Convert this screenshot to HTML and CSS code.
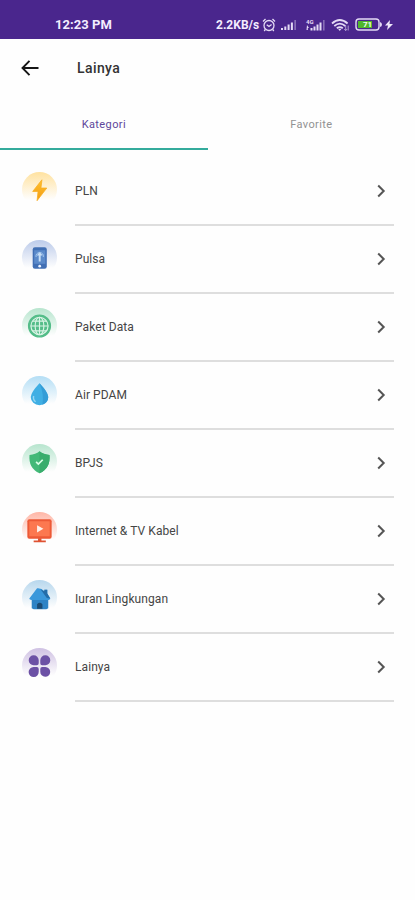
FILE: index.html
```html
<!DOCTYPE html>
<html lang="id">
<head>
<meta charset="utf-8">
<title>Lainya</title>
<link rel="stylesheet" href="styles.css">
</head>
<body>
<div class="status">
  <span class="time">12:23 PM</span>
  <div class="indicators">
    <span class="speed">2.2KB/s</span>
    <svg class="alarm" width="14" height="14" viewBox="0 0 14 14" fill="none" stroke="#e4daf5" stroke-width="1.3"><circle cx="7" cy="7.5" r="5"/><path d="M4.7 6.8 7 8.5l2.6-2M1 3.5 3.5 1M13 3.5 10.500 1M3.300 11.500 2.200 13M10.700 11.500 11.800 13"/></svg>
    <svg class="signal" width="16" height="12" viewBox="0 0 16 12" fill="#e4daf5"><path d="M0 9h2v2H0zM3.300 7.500h2V11h-2zM6.600 5.500h2V11h-2zM9.900 3.500h2V11h-2z"/><path d="M13.300 1h1.700v10h-1.700z" opacity=".4"/></svg>
    <svg class="signal4g" width="22" height="14" viewBox="0 0 22 14" fill="#e4daf5"><text class="net" x="1" y="5.500">4G</text><path d="M2 7l2 3H2.800v2H1.500zM5.500 10h2v2.500h-2zM8.500 8.500h2v4h-2zM11.500 6.500h2v6h-2zM14.500 4.500h2v8h-2z"/><path d="M18 2h1.600v10.500H18z" opacity=".4"/></svg>
    <svg class="wifi" width="19" height="14" viewBox="0 0 19 14" fill="none" stroke="#e4daf5" stroke-width="1.800"><path d="M1 5.500q7.800-7 15.600 0M3.300 8q5.500-4.800 11 0M5.800 10.300q3-2.400 6 0"/><path d="M7 10.800h3.600L8.800 13z" fill="#e4daf5" stroke="none"/><path d="M14.700 7.500v5M13.200 11l1.500 1.500 1.500-1.500M17.200 12.500v-5" stroke-width=".9" opacity=".7"/></svg>
    <svg class="battery" width="28" height="13" viewBox="0 0 28 13"><rect x="1" y="1" width="23" height="11" rx="3" fill="#4a268d" stroke="#e4daf5" stroke-width="1.400"/><path d="M3 3h14v7H3z" fill="#4fb52c"/><path d="M25 4q2 .5 2 2.500T25 9z" fill="#e4daf5"/><text class="charge" x="12.500" y="9.400" text-anchor="middle">71</text></svg>
    <svg class="bolt" width="8" height="12" viewBox="0 0 8 12"><path d="M5 1 0 6.500h3L2 11l6-6H4.500z" fill="#eee8fa"/></svg>
  </div>
</div>
<header class="bar">
  <svg width="18" height="16" viewBox="0 0 18 16" fill="none" stroke="#161616" stroke-width="1.900"><path d="M17.500 8H1.500M8.500.8 1.500 8l7 7.200"/></svg>
  <h1>Lainya</h1>
</header>
<nav class="tabs"><a class="tab active">Kategori</a><a class="tab">Favorite</a></nav>
<ul class="list">
  <li><span class="icon yellow"><svg viewBox="0 0 36 36"><defs><linearGradient id="gold" x2="0" y2="1"><stop stop-color="#ffc22e"/><stop offset="1" stop-color="#f39b14"/></linearGradient></defs><path d="M20.500 8 11 20h5.500L15.500 29.500 25.500 16.500H19.500z" fill="url(#gold)" stroke="#f9ae20" stroke-width=".8" stroke-linejoin="round"/></svg></span><div class="row"><span>PLN</span><svg class="chev" viewBox="0 0 9 14"><path d="m1.200 1.500 5.500 5.500-5.500 5.500"/></svg></div></li>
  <li><span class="icon blue"><svg viewBox="0 0 36 36"><rect x="11" y="7.500" width="14.500" height="22" rx="2.300" fill="#416fb4"/><path d="M12.500 10.500h11.500v14H12.500z" fill="#5b8aca"/><path d="m18.200 12-3 4h2v6h2v-6h2z" fill="#c7def6"/><path d="M14.500 17.500q-.7-4 3.700-4.700 4.400.700 3.700 4.700" fill="none" stroke="#a6c8ef"/><circle cx="18.200" cy="26.900" r="1.400" fill="#edf4ff"/></svg></span><div class="row"><span>Pulsa</span><svg class="chev" viewBox="0 0 9 14"><path d="m1.200 1.500 5.500 5.500-5.500 5.500"/></svg></div></li>
  <li><span class="icon green"><svg viewBox="0 0 36 36" fill="none" stroke="#d9f4e5" stroke-width="1.200"><circle cx="18" cy="18.500" r="11.300" fill="#54bd89" stroke="#54bd89"/><ellipse cx="18" cy="18.500" rx="4.500" ry="9"/><circle cx="18" cy="18.500" r="8.800"/><path d="M9 18.500h18M18 9.500v18M11 13.500h14M11 23.500h14"/></svg></span><div class="row"><span>Paket Data</span><svg class="chev" viewBox="0 0 9 14"><path d="m1.200 1.500 5.500 5.500-5.500 5.500"/></svg></div></li>
  <li><span class="icon sky"><svg viewBox="0 0 36 36"><path d="M18 7.500q9 9.500 9 14.200a9 8.300 0 0 1-18 0Q9 17 18 7.500z" fill="#40afe4"/><path d="M18 7.500q9 9.500 9 14.200a9 8.300 0 0 1-6 7.800Q23 19 18 7.500z" fill="#349dd7"/><path d="M12 20.500q-1 3.500 2 6" fill="none" stroke="#94d7f4" stroke-width="1.500"/></svg></span><div class="row"><span>Air PDAM</span><svg class="chev" viewBox="0 0 9 14"><path d="m1.200 1.500 5.500 5.500-5.500 5.500"/></svg></div></li>
  <li><span class="icon green"><svg viewBox="0 0 36 36"><path d="M18 7.500q4 3.500 10.300 3.700Q29.500 25 18 30 6.500 25 7.700 11.200 14 11 18 7.500z" fill="#43b978"/><path d="M18 7.500q4 3.500 10.300 3.700Q29.500 25 18 30z" fill="#39ad6d"/><path d="m14.500 18.500 2.300 2.200 4.500-4.500" fill="none" stroke="#d9ffe6" stroke-width="1.800"/></svg></span><div class="row"><span>BPJS</span><svg class="chev" viewBox="0 0 9 14"><path d="m1.200 1.500 5.500 5.500-5.500 5.500"/></svg></div></li>
  <li><span class="icon red"><svg viewBox="0 0 36 36"><rect x="5.500" y="7.500" width="25" height="20" rx="2" fill="#ed5936"/><rect x="7.500" y="9.500" width="21" height="15.500" fill="#fc7850"/><path d="m15.500 13.500 6.500 3.800-6.500 3.800z" fill="#fff0e9"/><path d="M16.500 27H20v2.300h4.500V31H12v-1.700h4.500z" fill="#df5232"/></svg></span><div class="row"><span>Internet &amp; TV Kabel</span><svg class="chev" viewBox="0 0 9 14"><path d="m1.200 1.500 5.500 5.500-5.500 5.500"/></svg></div></li>
  <li><span class="icon azure"><svg viewBox="0 0 36 36"><path d="M10 18h17v11l-2 1H12l-2-1z" fill="#2e83c5"/><path d="M15.500 8.500 7.500 19q0 1.500 2.500 1.500h17.500q2-.5 1.500-2l-3-4.500v-4h-3v1.500q-3-3.500-7.500-3z" fill="#3a98db"/><path d="m19 9.500 4 2V10h3v4l3 5-3.500-.5z" fill="#236da9"/><path d="M15.500 29.500V25q2.700-3 5.500 0v4.500z" fill="#1c4b73"/></svg></span><div class="row"><span>Iuran Lingkungan</span><svg class="chev" viewBox="0 0 9 14"><path d="m1.200 1.500 5.500 5.500-5.500 5.500"/></svg></div></li>
  <li><span class="icon purple"><svg viewBox="0 0 36 36" fill="#6c51a5"><path d="M12 7.500a5.200 5.200 0 0 1 5.200 5.200v3q0 2-2 2H12a5.100 5.100 0 0 1 0-10.200zM24 7.500a5.100 5.100 0 0 1 0 10.200h-3.200q-2 0-2-2v-3A5.200 5.200 0 0 1 24 7.500zM12 19.500h3.200q2 0 2 2v3a5.200 5.200 0 1 1-5.200-5zM20.800 19.500H24a5.100 5.100 0 1 1-5.200 5v-3q0-2 2-2z"/></svg></span><div class="row"><span>Lainya</span><svg class="chev" viewBox="0 0 9 14"><path d="m1.200 1.500 5.500 5.500-5.500 5.500"/></svg></div></li>
</ul>
</body>
</html>
```
FILE: styles.css
```css
* { box-sizing: border-box; }
body { margin: 0; width: 415px; height: 900px; overflow: hidden; background: #fefefe; color: #454545; font-family: Roboto, sans-serif; }
svg { display: block; flex: none; }
.status { height: 39px; padding: 10px 22px 0 55px; display: flex; justify-content: space-between; align-items: center; background: #4a268d; color: #f3edff; }
.time { font-size: 13px; font-weight: 700; letter-spacing: .05px; }
.indicators { display: flex; align-items: center; height: 16px; }
.speed { font-size: 12px; font-weight: 700; width: 46px; white-space: nowrap; }
.alarm { margin-right: 5px; }
.signal { margin-right: 8px; }
.signal4g { margin-right: 4px; }
.wifi { margin-right: 5px; }
.battery { margin-right: 2px; }
.net { font-size: 6px; font-weight: 700; }
.charge { font-size: 8px; font-weight: 700; fill: #f4ffef; }
.bar { height: 58px; padding-left: 21px; display: flex; align-items: center; }
h1 { margin: 0 0 0 38px; font-size: 14px; font-weight: 500; letter-spacing: .4px; color: #333; }
.tabs { height: 53px; display: flex; }
.tab { width: 50%; padding-top: 20px; text-align: center; font-size: 11px; line-height: 15px; letter-spacing: .4px; color: #929292; }
.active { width: 208px; border-bottom: 2.5px solid #34ab9c; color: #60469b; }
.list { list-style: none; margin: 8px 0 0; padding: 0 21px 0 22px; }
li { display: flex; height: 68px; }
.icon { width: 35px; height: 35px; margin: 14px 18px 0 0; border-radius: 50%; background: linear-gradient(var(--tint), #fefefe 80%); }
.icon svg { width: 35px; height: 35px; }
.yellow { --tint: #ffe2a0; }
.blue { --tint: #bccbea; }
.green { --tint: #b7e5ce; }
.sky { --tint: #b4def5; }
.red { --tint: #ffb6a6; }
.azure { --tint: #b7d7ed; }
.purple { --tint: #cfc1e3; }
.row { flex: 1; display: flex; justify-content: space-between; align-items: center; border-bottom: 2px solid #dedede; font-size: 12px; letter-spacing: .08px; }
.chev { width: 9px; height: 14px; margin-right: 8px; fill: none; stroke: #555; stroke-width: 2; }
```
